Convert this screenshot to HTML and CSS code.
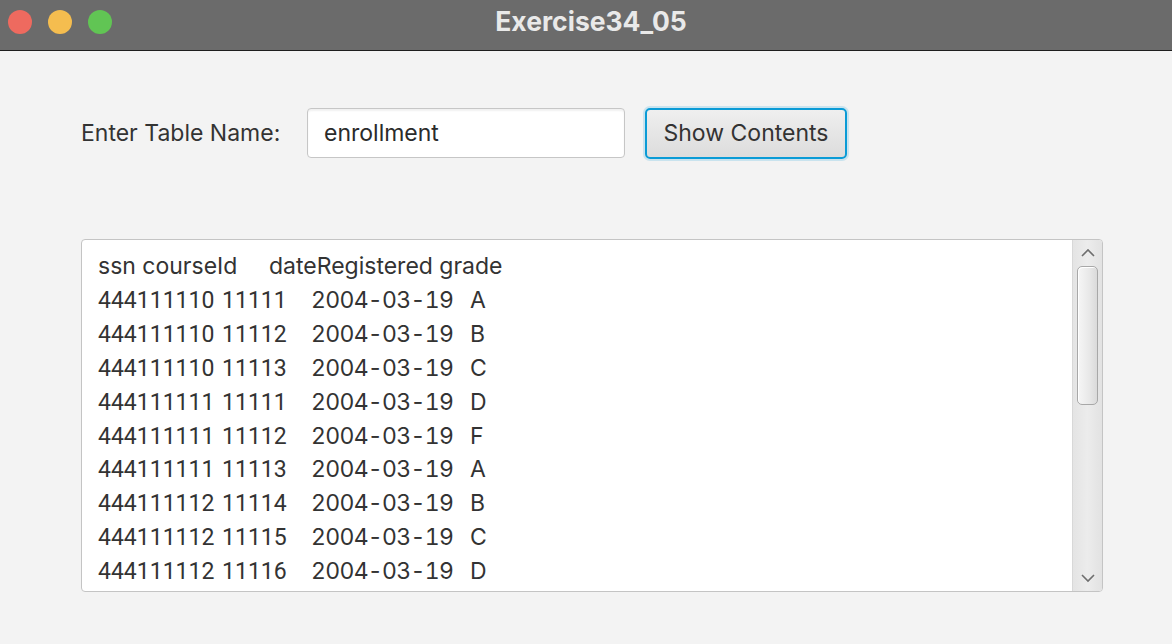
FILE: index.html
```html
<!DOCTYPE html>
<html>
<head>
<meta charset="utf-8">
<link rel="stylesheet" href="styles.css">
</head>
<body>
<div class="window">
  <div class="titlebar">
    <div class="lights">
      <span class="light red"></span>
      <span class="light yellow"></span>
      <span class="light green"></span>
    </div>
    <div class="title">Exercise34_05</div>
  </div>
  <div class="content">
    <div class="toolbar">
      <span class="label">Enter Table Name:</span>
      <div class="field">enrollment</div>
      <div class="button">Show Contents</div>
    </div>
    <div class="textarea">
      <div class="lines">
        <div class="line"><span class="h1">ssn courseId</span><span>dateRegistered grade</span></div>
        <div class="line"><span class="c1">444111110 11111</span><span class="c2">2004-03-19</span><span>A</span></div>
        <div class="line"><span class="c1">444111110 11112</span><span class="c2">2004-03-19</span><span>B</span></div>
        <div class="line"><span class="c1">444111110 11113</span><span class="c2">2004-03-19</span><span>C</span></div>
        <div class="line"><span class="c1">444111111 11111</span><span class="c2">2004-03-19</span><span>D</span></div>
        <div class="line"><span class="c1">444111111 11112</span><span class="c2">2004-03-19</span><span>F</span></div>
        <div class="line"><span class="c1">444111111 11113</span><span class="c2">2004-03-19</span><span>A</span></div>
        <div class="line"><span class="c1">444111112 11114</span><span class="c2">2004-03-19</span><span>B</span></div>
        <div class="line"><span class="c1">444111112 11115</span><span class="c2">2004-03-19</span><span>C</span></div>
        <div class="line"><span class="c1">444111112 11116</span><span class="c2">2004-03-19</span><span>D</span></div>
      </div>
      <div class="scrollbar">
        <svg class="arrow" width="16" height="10" viewBox="0 0 16 10"><path d="M2 8 L8 2 L14 8" fill="none" stroke="#6e6e6e" stroke-width="1.6"/></svg>
        <div class="track"><div class="thumb"></div></div>
        <svg class="arrow" width="16" height="10" viewBox="0 0 16 10"><path d="M2 2 L8 8 L14 2" fill="none" stroke="#6e6e6e" stroke-width="1.6"/></svg>
      </div>
    </div>
  </div>
</div>
</body>
</html>
```
FILE: styles.css
```css
* { box-sizing: border-box; }
html, body { margin: 0; padding: 0; }
body {
  width: 1172px;
  height: 644px;
  overflow: hidden;
  background: #f3f3f3;
  font-family: Inter, "Open Sans", "Liberation Sans", sans-serif;
  color: #333;
}
.window { display: flex; flex-direction: column; height: 644px; }
.titlebar {
  height: 51px;
  background: #6b6b6b;
  border-bottom: 1px solid #1e1e1e;
  display: flex;
  align-items: center;
  position: relative;
}
.lights { display: flex; gap: 16px; padding-left: 8px; }
.light { width: 24px; height: 24px; border-radius: 50%; display: block; margin-top: -6px; }
.red { background: #ee6a5f; }
.yellow { background: #f5bd4f; }
.green { background: #61c554; }
.title {
  position: absolute;
  left: 0; right: 0; top: 5px;
  text-align: center;
  color: #e9e9e9;
  font-weight: 700;
  font-size: 26.5px;
  padding-left: 10px;
}
.content { padding: 56px 69px 0 81px; display: flex; flex-direction: column; }
.toolbar { display: flex; align-items: center; height: 52px; }
.label { font-size: 23px; color: #333; width: 226px; }
.field {
  width: 318px; height: 50px;
  background: #fff;
  border: 1px solid #c6c6c6;
  border-radius: 4px;
  box-shadow: inset 0 2px 2px rgba(0,0,0,0.06);
  font-size: 23px;
  color: #2b2b2b;
  padding: 0 0 0 16px;
  display: flex; align-items: center;
}
.button {
  margin-left: 20px;
  width: 202px; height: 51px;
  border: 2px solid #0a9bd6;
  border-radius: 5px;
  box-shadow: 0 0 0 2px rgba(10,155,214,0.18);
  background: linear-gradient(#efefef, #dcdcdc);
  font-size: 23px;
  color: #333;
  display: flex; align-items: center; justify-content: center;
}
.textarea {
  margin-top: 80px;
  width: 1022px; height: 353px;
  background: #fff;
  border: 1px solid #c4c4c4;
  border-radius: 4px;
  display: flex;
  overflow: hidden;
}
.lines {
  flex: 1;
  padding: 10px 0 0 16px;
  font-size: 23px;
  line-height: 33.9px;
  color: #333;
}
.line { display: flex; white-space: pre; }
.line span { flex: none; }
.h1 { width: 171px; }
.c1 { width: 213px; font-family: Roboto, "Liberation Sans", sans-serif; word-spacing: 2px; }
.c2 { width: 159px; font-variant-numeric: tabular-nums; letter-spacing: -0.7px; }
.scrollbar {
  width: 30px;
  background: linear-gradient(90deg, #e4e4e4, #ececec 50%, #e2e2e2);
  border-left: 1px solid #d8d8d8;
  display: flex; flex-direction: column; align-items: center;
}
.arrow { margin: 8px 0 6px; flex: none; }
.arrow:last-child { margin: 6px 0 8px; }
.track { flex: 1; width: 100%; padding: 0 3px; }
.thumb {
  width: 21px; height: 139px;
  margin: 2px auto 0;
  border: 1px solid #a8a8a8;
  border-radius: 5px;
  background: linear-gradient(90deg, #f6f6f6, #e8e8e8 60%, #dadada);
  box-shadow: inset 1px 1px 0 #fff;
}
```
